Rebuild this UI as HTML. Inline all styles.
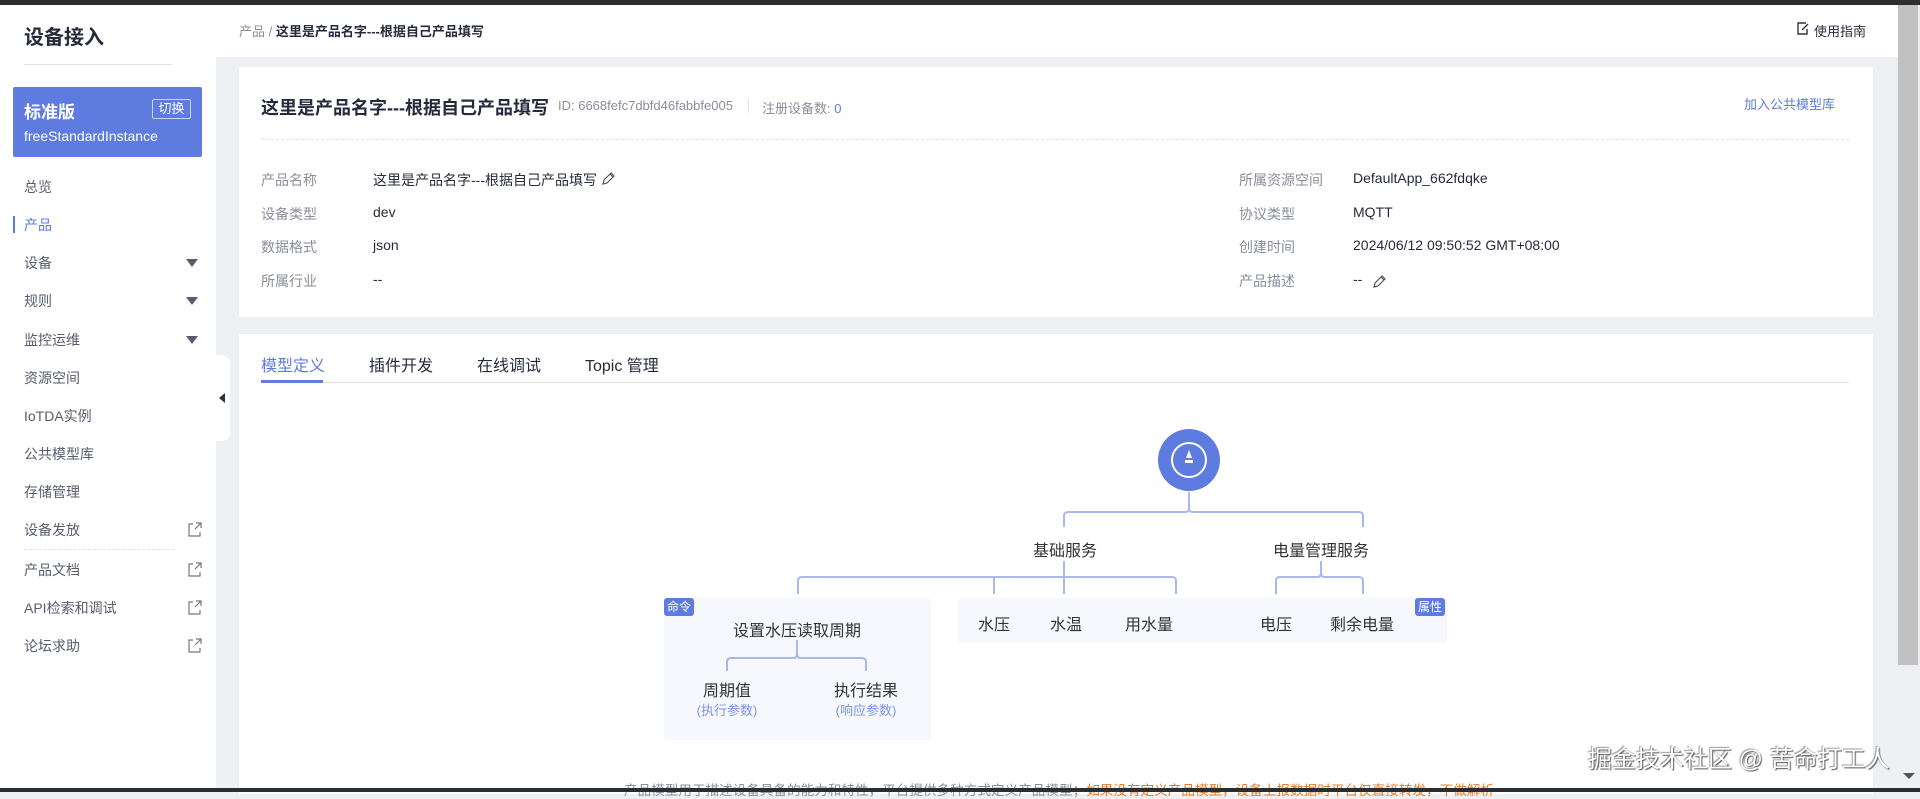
<!DOCTYPE html>
<html><head><meta charset="utf-8"><style>
*{margin:0;padding:0;box-sizing:border-box}
body{width:1920px;height:792px;overflow:hidden;background:#eef0f3;font-family:"Liberation Sans","Noto Sans CJK SC",sans-serif;color:#252b3a;position:relative}
.a{position:absolute;white-space:nowrap}
.lab{color:#8a8e99;font-size:14px}
.val{color:#252b3a;font-size:14px}
.menu{font-size:14px;color:#575d6c}
.arrow{width:0;height:0;border-left:6px solid transparent;border-right:6px solid transparent;border-top:8px solid #575d6c}
.dt{font-size:16px;color:#333;transform:translateX(-50%)}
.bd{font-size:12px;color:#fff;background:#5e7ce0;border-radius:3px;padding:1px 3px;line-height:16px}
</style></head><body>
<div class="a" style="left:0;top:0;width:1920px;height:5px;background:#2b2d31"></div>
<!-- sidebar -->
<div class="a" style="left:0;top:5px;width:216px;height:783px;background:#fff"></div>
<div class="a" style="left:24px;top:21px;font-size:20px;font-weight:bold;color:#252b3a">设备接入</div>
<div class="a" style="left:24px;top:64px;width:148px;height:1px;background:#dfe1e6"></div>
<div class="a" style="left:13px;top:87px;width:189px;height:70px;background:#5e7ce0;border-radius:2px"></div>
<div class="a" style="left:24px;top:98px;font-size:17px;font-weight:bold;color:#fff">标准版</div>
<div class="a" style="left:152px;top:99px;width:39px;height:20px;border:1px solid #c9d3f5;border-radius:2px;color:#fff;font-size:13px;text-align:center;line-height:18px">切换</div>
<div class="a" style="left:24px;top:128px;font-size:14px;color:#fff">freeStandardInstance</div>
<div class="a menu" style="left:24px;top:177px">总览</div>
<div class="a" style="left:13px;top:216px;width:2px;height:17px;background:#5e7ce0"></div>
<div class="a menu" style="left:24px;top:215px;color:#5e7ce0">产品</div>
<div class="a menu" style="left:24px;top:253px">设备</div><div class="a arrow" style="left:186px;top:259px"></div>
<div class="a menu" style="left:24px;top:291px">规则</div><div class="a arrow" style="left:186px;top:297px"></div>
<div class="a menu" style="left:24px;top:330px">监控运维</div><div class="a arrow" style="left:186px;top:336px"></div>
<div class="a menu" style="left:24px;top:368px">资源空间</div>
<div class="a menu" style="left:24px;top:406px">IoTDA实例</div>
<div class="a menu" style="left:24px;top:444px">公共模型库</div>
<div class="a menu" style="left:24px;top:482px">存储管理</div>
<div class="a menu" style="left:24px;top:520px">设备发放</div>
<div class="a" style="left:24px;top:549px;width:151px;border-top:1px dashed #dfe1e6"></div>
<div class="a menu" style="left:24px;top:560px">产品文档</div>
<div class="a menu" style="left:24px;top:598px">API检索和调试</div>
<div class="a menu" style="left:24px;top:636px">论坛求助</div>
<svg class="a" style="left:0;top:0" width="216" height="792"><g stroke="#777" stroke-width="1.2" fill="none">
<path d="M193 524h-4v12h11v-4M196 523h5v5M201 523l-6 6"/>
<path d="M193 564h-4v12h11v-4M196 563h5v5M201 563l-6 6"/>
<path d="M193 602h-4v12h11v-4M196 601h5v5M201 601l-6 6"/>
<path d="M193 640h-4v12h11v-4M196 639h5v5M201 639l-6 6"/></g></svg>
<div class="a" style="left:210px;top:355px;width:20px;height:86px;background:#fff;border-radius:0 8px 8px 0"></div>
<div class="a" style="left:219px;top:393px;width:0;height:0;border-top:5px solid transparent;border-bottom:5px solid transparent;border-right:6px solid #333"></div>
<!-- header -->
<div class="a" style="left:216px;top:5px;width:1682px;height:52px;background:#fff"></div>
<div class="a" style="left:239px;top:21px;font-size:13px;color:#8a8e99">产品 <span style="color:#8a8e99">/</span> <b style="color:#252b3a">这里是产品名字---根据自己产品填写</b></div>
<svg class="a" style="left:1797px;top:22px" width="12" height="13" viewBox="0 0 12 13"><path d="M9 1H1v11h9V7M5 8l6-6" stroke="#333" stroke-width="1.4" fill="none"/></svg>
<div class="a" style="left:1814px;top:21px;font-size:13px;color:#252b3a">使用指南</div>
<!-- scrollbar -->
<div class="a" style="left:1898px;top:5px;width:22px;height:783px;background:#eef0f3"></div>
<div class="a" style="left:1898px;top:5px;width:20px;height:660px;background:#c1c1c1"></div>
<div class="a" style="left:1903px;top:773px;border-left:6px solid transparent;border-right:6px solid transparent;border-top:6px solid #555"></div>
<!-- card 1 -->
<div class="a" style="left:239px;top:67px;width:1634px;height:250px;background:#fff"></div>
<div class="a" style="left:261px;top:94px;font-size:18px;font-weight:bold;color:#252b3a">这里是产品名字---根据自己产品填写</div>
<div class="a" style="left:558px;top:98px;font-size:13px;color:#8a8e99">ID: 6668fefc7dbfd46fabbfe005</div>
<div class="a" style="left:748px;top:99px;width:1px;height:14px;background:#dfe1e6"></div>
<div class="a" style="left:762px;top:98px;font-size:13px;color:#8a8e99">注册设备数: <span style="color:#5e7ce0">0</span></div>
<div class="a" style="left:1744px;top:94px;font-size:13px;color:#5e7ce0">加入公共模型库</div>
<div class="a" style="left:261px;top:139px;width:1588px;border-top:1px dashed #dfe1e6"></div>
<div class="a lab" style="left:261px;top:170px">产品名称</div><div class="a val" style="left:373px;top:170px">这里是产品名字---根据自己产品填写</div>
<svg class="a" style="left:601px;top:171px" width="15" height="15" viewBox="0 0 15 15"><path d="M2 13l1-4 7-7 3 3-7 7zM9 3l3 3" stroke="#555" stroke-width="1.2" fill="none"/></svg>
<div class="a lab" style="left:261px;top:204px">设备类型</div><div class="a val" style="left:373px;top:204px">dev</div>
<div class="a lab" style="left:261px;top:237px">数据格式</div><div class="a val" style="left:373px;top:237px">json</div>
<div class="a lab" style="left:261px;top:271px">所属行业</div><div class="a val" style="left:373px;top:271px">--</div>
<div class="a lab" style="left:1239px;top:170px">所属资源空间</div><div class="a val" style="left:1353px;top:170px">DefaultApp_662fdqke</div>
<div class="a lab" style="left:1239px;top:204px">协议类型</div><div class="a val" style="left:1353px;top:204px">MQTT</div>
<div class="a lab" style="left:1239px;top:237px">创建时间</div><div class="a val" style="left:1353px;top:237px">2024/06/12 09:50:52 GMT+08:00</div>
<div class="a lab" style="left:1239px;top:271px">产品描述</div><div class="a val" style="left:1353px;top:271px">--</div>
<svg class="a" style="left:1372px;top:274px" width="15" height="15" viewBox="0 0 15 15"><path d="M2 13l1-4 7-7 3 3-7 7zM9 3l3 3" stroke="#555" stroke-width="1.2" fill="none"/></svg>
<!-- card 2 -->
<div class="a" style="left:239px;top:334px;width:1634px;height:460px;background:#fff"></div>
<div class="a" style="left:261px;top:352px;font-size:16px;color:#5e7ce0">模型定义</div>
<div class="a" style="left:369px;top:352px;font-size:16px;color:#252b3a">插件开发</div>
<div class="a" style="left:477px;top:352px;font-size:16px;color:#252b3a">在线调试</div>
<div class="a" style="left:585px;top:352px;font-size:16px;color:#252b3a">Topic 管理</div>
<div class="a" style="left:261px;top:382px;width:1588px;height:1px;background:#dfe1e6"></div>
<div class="a" style="left:261px;top:380px;width:62px;height:3px;background:#5e7ce0"></div>
<!-- diagram -->
<div class="a" style="left:664px;top:598px;width:267px;height:142px;background:#f6f8fd;border-radius:4px"></div>
<div class="a" style="left:958px;top:598px;width:489px;height:45px;background:#f6f8fd;border-radius:4px"></div>
<svg class="a" style="left:0;top:0" width="1920" height="792">
<g stroke="#a9b8ee" stroke-width="2" fill="none">
<path d="M1189 492V508q0 4-4 4H1068q-4 0-4 4V527M1189 508q0 4 4 4H1359q4 0 4 4V527"/>
<path d="M1064 561V594M798 594V581q0-4 4-4H1172q4 0 4 4V594M994 577V594"/>
<path d="M1321 561V573q0 4-4 4H1280q-4 0-4 4V594M1321 573q0 4 4 4H1359q4 0 4 4V594"/>
<path d="M797 640V654q0 4-4 4H731q-4 0-4 4V671M797 654q0 4 4 4H862q4 0 4 4V671"/>
</g>
<circle cx="1189" cy="460" r="31" fill="#5e7ce0"/>
<circle cx="1189" cy="460" r="17" fill="none" stroke="#fff" stroke-width="2"/>
<path d="M1189 450l-3 8h6z" fill="#fff"/><rect x="1185" y="460" width="8" height="3" fill="#fff"/>
</svg>
<div class="a dt" style="left:1065px;top:537px">基础服务</div>
<div class="a dt" style="left:1321px;top:537px">电量管理服务</div>
<div class="a bd" style="left:664px;top:598px">命令</div>
<div class="a bd" style="left:1415px;top:598px">属性</div>
<div class="a dt" style="left:797px;top:617px">设置水压读取周期</div>
<div class="a dt" style="left:727px;top:677px">周期值</div>
<div class="a dt" style="left:727px;top:700px;font-size:13px;color:#7c93e6">(执行参数)</div>
<div class="a dt" style="left:866px;top:677px">执行结果</div>
<div class="a dt" style="left:866px;top:700px;font-size:13px;color:#7c93e6">(响应参数)</div>
<div class="a dt" style="left:994px;top:611px">水压</div>
<div class="a dt" style="left:1066px;top:611px">水温</div>
<div class="a dt" style="left:1149px;top:611px">用水量</div>
<div class="a dt" style="left:1276px;top:611px">电压</div>
<div class="a dt" style="left:1362px;top:611px">剩余电量</div>
<div class="a" style="left:624px;top:779px;font-size:13.6px;color:#8a8e99">产品模型用于描述设备具备的能力和特性，平台提供多种方式定义产品模型；<span style="color:#e37d29">如果没有定义产品模型，设备上报数据时平台仅直接转发，不做解析</span></div>
<div class="a" style="left:1588px;top:739px;font-size:24px;color:#fff;text-shadow:1px 1px 1px #555,-1px -1px 1px #999">掘金技术社区 @ 苦命打工人</div>
<div class="a" style="left:0;top:788px;width:1920px;height:4px;background:#2b2d31"></div>
</body></html>
